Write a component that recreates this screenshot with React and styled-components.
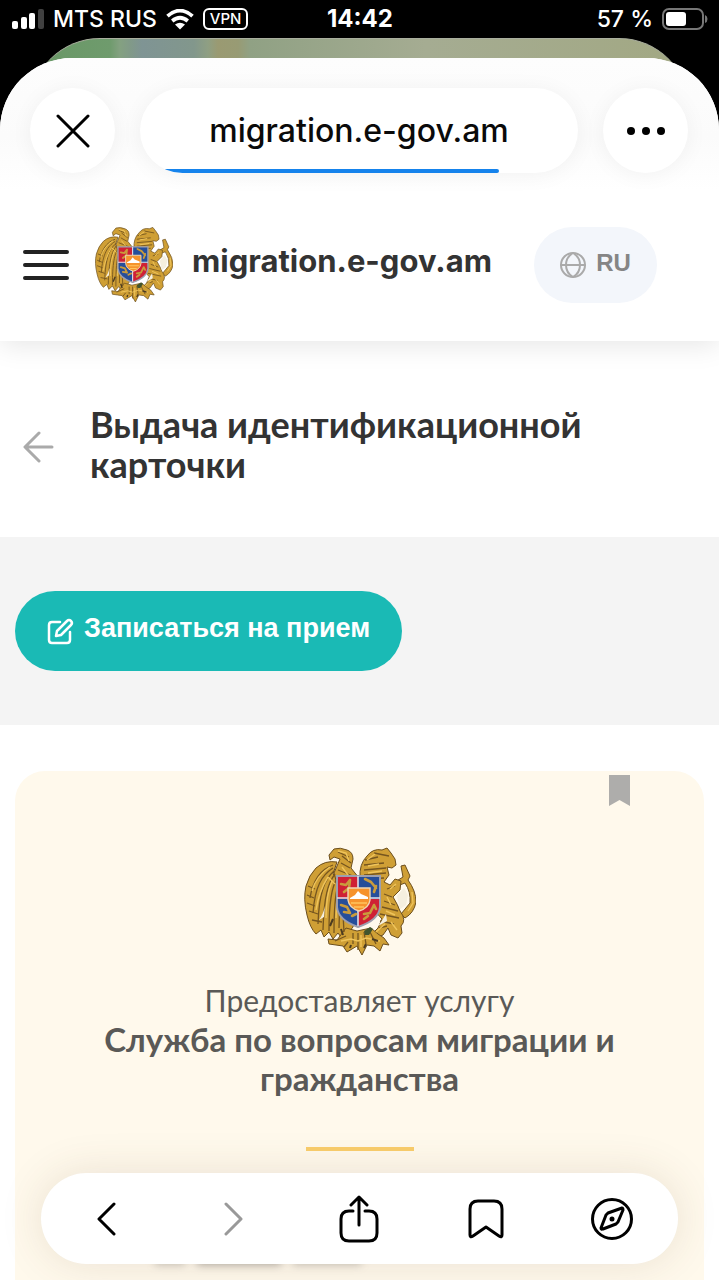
import React from "react";
import styled, { createGlobalStyle } from "styled-components";

const GlobalStyle = createGlobalStyle`
  * { box-sizing: border-box; }
  body { margin: 0; background: #000; }
  button { border: 0; padding: 0; margin: 0; font: inherit; color: inherit; background: none; cursor: pointer; }
  svg { display: block; flex: none; }
`;

const ui = `Inter, "Noto Sans", sans-serif`;
const humanist = `Lato, "Noto Sans", sans-serif`;

const Screen = styled.div`
  min-height: 100vh;
  display: flex;
  flex-direction: column;
  background: #000;
  font-family: ${ui};
  overflow: hidden;
`;

const StatusBar = styled.div`
  display: grid;
  grid-template-columns: 1fr auto 1fr;
  align-items: center;
  height: 38px;
  padding: 0 11px 0 12px;
  color: #fff;
  font-size: 23px;
  font-weight: 500;
  line-height: 38px;
`;

const StatusGroup = styled.div`
  display: flex;
  align-items: center;
  gap: ${(p) => p.$gap}px;
  justify-content: ${(p) => (p.$end ? "flex-end" : "flex-start")};
`;

const Clock = styled.time`
  font-weight: 700;
  font-size: 24px;
`;

const VpnBadge = styled.span`
  border: 2px solid #fff;
  border-radius: 6px;
  height: 22px;
  padding: 0 5px;
  font-size: 15px;
  line-height: 18px;
`;

const PreviousSheet = styled.div`
  height: 72px;
  margin: 0 30px -52px;
  border-radius: 70px 70px 0 0;
  border-top: 1px solid #a9ae9e;
  background: linear-gradient(90deg, #689765 0, #6f9b6d 80px, #84a181 90px, #819a88 100px, #7f9494 112px,
    #82978c 164px, #8f9f83 178px, #9a9a72 188px, #989b74 208px, #90a184 220px, #a5ac92 60%, #a2a883 100%);
`;

const Sheet = styled.div`
  position: relative;
  flex: 1;
  display: flex;
  flex-direction: column;
  overflow: hidden;
  border-radius: 72px 72px 0 0;
  background: #fff;
`;

const BrowserBar = styled.header`
  position: relative;
  z-index: 1;
  display: flex;
  justify-content: space-between;
  gap: 25px;
  padding: 30px 31px 17px 30px;
  background: linear-gradient(#fdfdfd, #fbfbfb 60%, #fff);
`;

const GlassButton = styled.button`
  flex: none;
  display: grid;
  place-items: center;
  width: 85px;
  height: 85px;
  border-radius: 50%;
  background: #fff;
  box-shadow: 0 2px 22px rgba(0, 0, 0, 0.05);
`;

const AddressPill = styled.button`
  position: relative;
  flex: 1;
  height: 85px;
  border-radius: 43px;
  overflow: hidden;
  background: #fff;
  box-shadow: 0 2px 22px rgba(0, 0, 0, 0.05);
  color: #0a0a0a;
  font-size: 32px;
  font-weight: 500;
`;

const LoadProgress = styled.span`
  position: absolute;
  left: 0;
  bottom: 0;
  width: 82%;
  height: 4px;
  border-radius: 0 2px 2px 0;
  background: #1583ec;
`;

const SiteHeader = styled.div`
  position: relative;
  display: flex;
  align-items: center;
  padding: 37px 62px 38px 23px;
  background: #fff;
  box-shadow: 0 4px 26px rgba(0, 0, 0, 0.1);
`;

const SiteName = styled.a`
  display: flex;
  align-items: center;
  gap: 19px;
  margin-left: 26px;
  color: #333;
  font-size: 31px;
  font-weight: 700;
  line-height: 36px;
  text-decoration: none;
`;

const SiteNameText = styled.span`
  padding-bottom: 8px;
`;

const LanguageButton = styled.button`
  display: flex;
  align-items: center;
  justify-content: center;
  gap: 10px;
  width: 123px;
  height: 76px;
  margin-left: auto;
  border-radius: 38px;
  background: #f3f6fb;
  color: #858585;
  font: 700 24px/28px "Liberation Sans", sans-serif;
`;

const LanguageCode = styled.span`
  padding-bottom: 4px;
`;

const TitleRow = styled.div`
  display: flex;
  align-items: center;
  gap: 36px;
  min-height: 196px;
  padding: 63px 60px 53px 23px;
`;

const BackButton = styled.button`
  padding-top: 6px;
`;

const PageTitle = styled.h1`
  margin: 0;
  color: #333;
  font: 700 36px/40px ${humanist};
`;

const ActionBand = styled.div`
  padding: 54px 15px;
  background: #f4f4f4;
`;

const BookButton = styled.button`
  display: inline-flex;
  align-items: center;
  justify-content: center;
  gap: 10px;
  height: 80px;
  padding: 0 32px;
  border-radius: 40px;
  background: #1abab5;
  color: #fff;
  font: 700 27px/32px "Liberation Sans", sans-serif;
  vertical-align: top;
`;

const BookLabel = styled.span`
  padding-bottom: 6px;
`;

const ProviderCard = styled.section`
  position: relative;
  flex: 1;
  display: flex;
  flex-direction: column;
  align-items: center;
  margin: 46px 15px 0;
  padding: 76px 60px 0;
  border-radius: 30px 30px 0 0;
  background: #fff9ec;
  color: #5a5957;
  font: 400 30px/39px ${humanist};
  text-align: center;
`;

const SaveButton = styled.button`
  position: absolute;
  top: 4px;
  right: 74px;
`;

const ProviderText = styled.p`
  margin: 24px 0 0;
`;

const ProviderName = styled.strong`
  display: block;
  font-size: 33px;
  font-weight: 700;
`;

const Divider = styled.hr`
  width: 108px;
  height: 4px;
  margin: 49px 0 0;
  border: 0;
  background: #f9cd6c;
`;

const ObscuredLine = styled.div`
  align-self: flex-start;
  display: flex;
  gap: 12px;
  margin: 98px 0 0 80px;
  filter: blur(4px);
`;

const ObscuredWord = styled.span`
  width: ${(p) => p.$width}px;
  height: 16px;
  background: rgba(90, 85, 80, ${(p) => p.$ink});
`;

const BottomBar = styled.nav`
  position: fixed;
  left: 41px;
  right: 41px;
  bottom: 16px;
  display: grid;
  grid-template-columns: repeat(5, 1fr);
  height: 91px;
  padding: 0 3px;
  border-radius: 46px;
  background: #fff;
  box-shadow: 0 0 44px rgba(90, 60, 40, 0.13);
`;

const NavButton = styled.button`
  display: grid;
  place-items: center;
  color: ${(p) => (p.disabled ? "#999" : "#000")};
`;

function Emblem({ width, height }) {
  return (
    <svg width={width} height={height} viewBox="0 0 112 108" role="img" aria-label="Герб Армении">
      <g stroke="#6b4e1d" strokeWidth="1" strokeLinejoin="round" fill="#cf9f35">
        {/* sword, held at the right */}
        <path d="M97 18L101 17L106 28L104 32Q112 43 112 54Q110 65 101 70L97 66L106 55Q107 44 101 35L93 38L91 34L99 29Z" />
        {/* lion */}
        <path d="M56 30Q55 16 63 8Q69 0 78 2L83 0L87 5L91 11L92 17L88 20L83 19L85 27L80 34L86 37L91 31L97 33L96 42L89 49Q94 57 96 63Q103 72 97 78L98 85L94 90L87 87L84 80L79 87L69 91L66 88L74 80L78 71L70 62L60 52Z" />
        {/* eagle */}
        <path d="M48 29L38 36L29 26L33 14Q21 12 12 20Q5 27 2 38Q-1 51 3 67Q6 80 12 86L17 82L20 89L25 84L29 91L34 85L39 92L44 85L49 79L57 35Z" />
        <path d="M25 7L30 1Q36-1 43 2Q49 4 49 11L47 20L55 30V44L34 40L30 25L36 11L30 9L26 12Z" />
        {/* base */}
        <path d="M42 80L53 83L67 80L74 86L80 90L85 97L79 96L76 103L70 98L63 97L58 107L53 98L48 101L43 104L39 98L32 97L25 96L24 91L33 92Z" />
      </g>
      <g fill="none" stroke="#76561f" strokeWidth="1.3">
        <path d="M29 17C17 21 9 32 6 50M29 20C18 27 11 38 9 65M30 23C21 31 15 44 14 76M31 26C24 35 20 48 19 82M33 31C28 38 25 52 25 83M34 37C31 47 30 58 30 85M36 43L35 80M39 66L40 84" />
        <path d="M4 38L11 41M3 47L10 50M3 55L11 58M5 63L14 66M8 72L18 74M34 4L45 9M38 8L47 15M37 15L46 20M34 22L49 28M34 28L52 33M61 12L74 9M60 17L80 15M60 22L82 20M60 27L82 25M63 31L80 30M70 5L85 8" />
        <path d="M83 41L91 38M80 46L88 49M80 53L91 57M78 59L94 63M76 66L95 70M76 73L90 76M75 80L83 78M49 85L49 96M54 85L54 102M60 84L62 96M66 84L72 96M42 88L31 93M44 94L40 99" />
      </g>
      <g fill="none" stroke="#efc45b" strokeWidth="1.4">
        <path d="M26 19Q12 28 8 43M24 29Q15 43 12 62M28 33Q22 47 22 70M24 29L31 36M33 47L32 70M34 3L42 5L45 13M38 19L44 27L52 32M63 12L71 6M64 18L75 16M64 25L78 23M86 41L92 36M83 49L87 57M82 63L91 67M87 74L93 82M72 84L81 76M37 93L47 91L54 93L62 90L76 93M57 87L57 99M108 44L109 55L104 63" />
      </g>
      <path d="M21 58Q19 67 15 72L20 69ZM82 66Q78 73 74 78L83 73ZM93 48L96 61L102 57L104 47L100 40Z" fill="#f5efdf" />
      <path d="M29 71L26 78M37 81L39 87M60 100L62 96M47 97L46 100M68 91L74 93" stroke="#4b3b20" strokeWidth="2" />
      <path d="M33 28H76V59Q75 72 54 79Q34 72 33 59Z" fill="#264e9a" />
      <path d="M33 28H54V51H33ZM54 51H76V59Q75 72 54 79Z" fill="#cf2035" />
      <path d="M33 28H76V59Q75 72 54 79Q34 72 33 59Z" fill="none" stroke="#9d9fae" strokeWidth="2" />
      <path d="M54 28V78M33 50H76" stroke="#dce0ec" strokeWidth="1.6" />
      <g fill="none" stroke="#c99b3c" strokeWidth="2.6" strokeLinecap="round" strokeLinejoin="round">
        <path d="M37 36L42 37L46 32L45 40L40 44M61 31L67 34L72 40M70 44L72 38M37 57L43 59L46 65L40 64M48 68L52 66M60 66L66 65L70 57L72 61M60 71L64 68" />
      </g>
      <path d="M44 40H66V52Q65 60 55 63Q45 60 44 52Z" fill="#f6932d" stroke="#f0d8b4" strokeWidth="1.4" />
      <path d="M46 50L51 47L54 43L57 46L64 49V51H46Z" fill="#fff" />
      <path d="M47 55H63M50 59H60" stroke="#ffc55e" strokeWidth="1.5" />
      <path d="M60 83L66 79L69 81L65 87L61 87Z" fill="#42552e" />
    </svg>
  );
}

function Signal() {
  return (
    <svg width="32" height="20" viewBox="0 0 32 20" aria-hidden="true">
      <rect x="0" y="12" width="6" height="8" rx="2" fill="#fff" />
      <rect x="9" y="8" width="6" height="12" rx="2" fill="#fff" />
      <rect x="17" y="4" width="6" height="16" rx="2" fill="#fff" />
      <rect x="26" y="0" width="6" height="20" rx="2" fill="#404040" />
    </svg>
  );
}

function Wifi() {
  return (
    <svg width="28" height="21" viewBox="0 0 28 21" aria-hidden="true">
      <path d="M1.5 7.2Q14-4 26.5 7.2M6.2 12Q14 5.5 21.8 12" fill="none" stroke="#fff" strokeWidth="3.7" />
      <path d="M9 15.5Q14 12 19 15.5L14 20.5Z" fill="#fff" />
    </svg>
  );
}

function Battery() {
  return (
    <svg width="46" height="22" viewBox="0 0 46 22" aria-hidden="true">
      <rect x="1" y="1" width="40" height="20" rx="6" fill="none" stroke="#777" strokeWidth="2" />
      <rect x="4" y="4" width="20" height="14" rx="3" fill="#fff" />
      <path d="M43 7Q45.5 8 45.5 11T43 15Z" fill="#777" />
    </svg>
  );
}

function Stroke({ width, height, weight = 3, color = "currentColor", children }) {
  return (
    <svg width={width} height={height} viewBox={`0 0 ${width} ${height}`} fill="none" stroke={color}
      strokeWidth={weight} strokeLinecap="round" strokeLinejoin="round" aria-hidden="true">
      {children}
    </svg>
  );
}

export default function App() {
  return (
    <Screen>
      <GlobalStyle />
      <StatusBar>
        <StatusGroup $gap={9}>
          <Signal />
          <span>MTS RUS</span>
          <Wifi />
          <VpnBadge>VPN</VpnBadge>
        </StatusGroup>
        <Clock>14:42</Clock>
        <StatusGroup $gap={9} $end>
          <span>57 %</span>
          <Battery />
        </StatusGroup>
      </StatusBar>
      <PreviousSheet />
      <Sheet>
        <BrowserBar>
          <GlassButton aria-label="Закрыть">
            <Stroke width={34} height={34} weight={3} color="#000"><path d="M2 2L32 32M32 2L2 32" /></Stroke>
          </GlassButton>
          <AddressPill>
            migration.e-gov.am
            <LoadProgress />
          </AddressPill>
          <GlassButton aria-label="Ещё">
            <svg width="38" height="8" viewBox="0 0 38 8" aria-hidden="true">
              <circle cx="4" cy="4" r="4" /><circle cx="19" cy="4" r="4" /><circle cx="34" cy="4" r="4" />
            </svg>
          </GlassButton>
        </BrowserBar>

        <SiteHeader>
          <button aria-label="Меню">
            <Stroke width={46} height={32} weight={4} color="#222"><path d="M2 3H44M2 16H44M2 29H44" /></Stroke>
          </button>
          <SiteName href="#">
            <Emblem width={78} height={76} />
            <SiteNameText>migration.e-gov.am</SiteNameText>
          </SiteName>
          <LanguageButton>
            <Stroke width={26} height={26} weight={2} color="#aaa">
              <circle cx="13" cy="13" r="12" />
              <path d="M1 13H25M13 1Q6 5 6 13T13 25M13 1Q20 5 20 13T13 25" />
            </Stroke>
            <LanguageCode>RU</LanguageCode>
          </LanguageButton>
        </SiteHeader>

        <TitleRow>
          <BackButton aria-label="Назад">
            <Stroke width={31} height={32} weight={3} color="#aaa"><path d="M29 16H3M16 2L2 16L16 30" /></Stroke>
          </BackButton>
          <PageTitle>Выдача идентификационной карточки</PageTitle>
        </TitleRow>

        <ActionBand>
          <BookButton>
            <Stroke width={27} height={27} weight={2.5}>
              <path d="M13 4H5Q2 4 2 7V22Q2 25 5 25H20Q23 25 23 22V14" />
              <path d="M20 3Q22 1 24 3T24 7L14 17L9 18L10 13Z" />
            </Stroke>
            <BookLabel>Записаться на прием</BookLabel>
          </BookButton>
        </ActionBand>

        <ProviderCard>
          <SaveButton aria-label="Сохранить">
            <svg width="21" height="31" viewBox="0 0 21 31" aria-hidden="true">
              <path d="M0 0H21V31L10.5 25L0 31Z" fill="#aeadab" />
            </svg>
          </SaveButton>
          <Emblem width={112} height={110} />
          <ProviderText>
            Предоставляет услугу
            <ProviderName>Служба по вопросам миграции и гражданства</ProviderName>
          </ProviderText>
          <Divider />
          <ObscuredLine aria-hidden="true">
            <ObscuredWord $width={30} $ink={0.3} />
            <ObscuredWord $width={84} $ink={0.45} />
            <ObscuredWord $width={68} $ink={0.3} />
          </ObscuredLine>
        </ProviderCard>
      </Sheet>

      <BottomBar aria-label="Браузер">
        <NavButton aria-label="Назад">
          <Stroke width={20} height={34}><path d="M17 2L2 17L17 32" /></Stroke>
        </NavButton>
        <NavButton aria-label="Вперёд" disabled>
          <Stroke width={20} height={34}><path d="M3 2L18 17L3 32" /></Stroke>
        </NavButton>
        <NavButton aria-label="Поделиться">
          <Stroke width={40} height={48}>
            <path d="M14 16H10Q2 16 2 24V38Q2 46 10 46H30Q38 46 38 38V24Q38 16 30 16H26M20 30V3M12 10L20 2L28 10" />
          </Stroke>
        </NavButton>
        <NavButton aria-label="Закладки">
          <Stroke width={36} height={40}>
            <path d="M2 10Q2 2 10 2H26Q34 2 34 10V36Q34 39 31 37L18 28L5 37Q2 39 2 36Z" />
          </Stroke>
        </NavButton>
        <NavButton aria-label="Обзор">
          <Stroke width={42} height={42}>
            <circle cx="21" cy="21" r="19.5" />
            <path d="M31 10L17 15Q16 16 15 17L10 30Q10 32 12 31L25 26Q26 25 27 24L32 12Q32 10 31 10Z" />
            <circle cx="21" cy="21" r="1.5" fill="currentColor" strokeWidth="2" />
          </Stroke>
        </NavButton>
      </BottomBar>
    </Screen>
  );
}
